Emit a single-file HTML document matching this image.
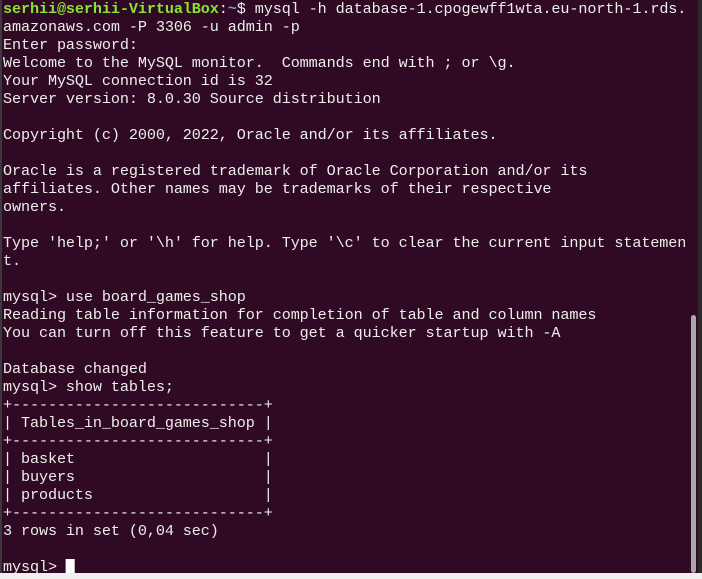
<!DOCTYPE html>
<html><head><meta charset="utf-8"><style>
html,body{margin:0;padding:0;width:702px;height:579px;overflow:hidden;background:#300a24;}
#t{position:absolute;left:3px;top:1px;margin:0;font-family:"Liberation Mono",monospace;font-size:15px;letter-spacing:-0.1px;line-height:18px;color:#eeeeec;white-space:pre;transform:scaleX(1.01);transform-origin:0 0;}
.g{color:#8ae234;font-weight:bold}.b{color:#729fcf;font-weight:bold}
.cur{display:inline-block;width:9px;height:17px;background:#fff;vertical-align:top;}
#lb{position:absolute;left:0;top:0;width:2px;height:579px;background:#3a3a3a}
#sb{position:absolute;left:691px;top:315px;width:5px;height:258px;background:#a8a8a8;border-radius:3px}
#rb{position:absolute;left:698px;top:0;width:4px;height:573px;background:#2a2a2a}
#bot{position:absolute;left:0;top:573px;width:702px;height:6px;background:#efefef}
</style></head><body>
<div id="lb"></div>
<pre id="t"><span class="g">serhii@serhii-VirtualBox</span>:<span class="b">~</span>$ mysql -h database-1.cpogewff1wta.eu-north-1.rds.
amazonaws.com -P 3306 -u admin -p
Enter password: 
Welcome to the MySQL monitor.  Commands end with ; or \g.
Your MySQL connection id is 32
Server version: 8.0.30 Source distribution

Copyright (c) 2000, 2022, Oracle and/or its affiliates.

Oracle is a registered trademark of Oracle Corporation and/or its
affiliates. Other names may be trademarks of their respective
owners.

Type 'help;' or '\h' for help. Type '\c' to clear the current input statemen
t.

mysql&gt; use board_games_shop
Reading table information for completion of table and column names
You can turn off this feature to get a quicker startup with -A

Database changed
mysql&gt; show tables;
+----------------------------+
| Tables_in_board_games_shop |
+----------------------------+
| basket                     |
| buyers                     |
| products                   |
+----------------------------+
3 rows in set (0,04 sec)

mysql&gt; <span class="cur"></span></pre>
<div id="sb"></div>
<div id="rb"></div>
<div id="bot"></div>
</body></html>
